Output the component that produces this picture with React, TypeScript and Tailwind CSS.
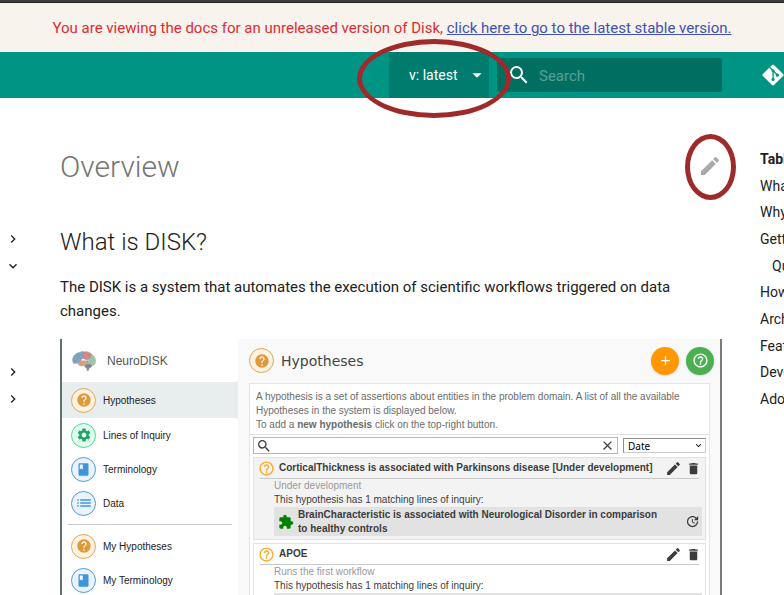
import React from "react";
import {
  MdAdd,
  MdArrowDropDown,
  MdBook,
  MdChevronRight,
  MdClose,
  MdDelete,
  MdEdit,
  MdExpandMore,
  MdExtension,
  MdHelp,
  MdHelpOutline,
  MdList,
  MdSearch,
  MdSettings,
  MdUpdate,
} from "react-icons/md";
import { FaGitAlt } from "react-icons/fa";

const toc = [
  "What is DISK?",
  "Why DISK?",
  "Getting started",
  "Quickstart",
  "How to cite",
  "Architecture",
  "Features",
  "Development",
  "Adopters",
];

const navRows = ["", "", "", "right", "down", "", "", "", "right", "right"];

function Ring({ className }: { className: string }) {
  return (
    <span
      aria-hidden="true"
      className={`pointer-events-none absolute z-10 rounded-[50%] border-[#9f2a2c] ${className}`}
    />
  );
}

function Brain() {
  return (
    <svg viewBox="0 0 72 60" className="h-5 w-6 shrink-0" aria-hidden="true">
      <g stroke="#85858f" strokeWidth="1.3" strokeLinejoin="round">
        <path d="M38 42c4-4 18-5 22 0 0 6-4 8-8 8l-2 8-5 1-1-8c-5-1-7-4-6-9z" fill="#8f8cab" />
        <path d="M2 30C0 18 10 6 24 4c6-3 12-3 14 0l-6 14-6 12c-8 6-18 10-22 6z" fill="#7faac6" />
        <path d="M36 3c10-3 18 1 22 6l-2 12-10 6-16-5z" fill="#df8a88" />
        <path d="M57 9c9 4 15 14 13 26-1 6-7 10-12 7l-13-8 1-9 9-5z" fill="#a6cdae" />
        <path d="M17 36c3-8 11-8 15-6 8-2 15 1 16 6-3 6-8 7-13 7-5 4-16 1-18-7z" fill="#dda981" />
      </g>
      <g fill="none" stroke="#667890" strokeWidth="1" strokeLinecap="round">
        <path d="M7 24c4-4 7 1 10-3M12 14c5-2 5 4 9 3M20 9c3 2 6 0 8 3M9 31c4-2 6-1 9-4M22 20c3 0 4 3 3 5" />
        <path d="M38 8c3 4 7 0 9 4M34 16c5-1 6 4 11 2M50 8c-1 5 4 4 3 9" stroke="#b06062" />
        <path d="M59 16c-2 4 4 5 2 9M65 22c-3 4 2 6-1 9M52 26c4 1 4 5 8 5M53 34c3-1 5 3 8 2" stroke="#6b9a7a" />
        <path d="M24 34c4-2 6 3 10 1s6-1 8 2M24 39c3 1 6-1 9 1" stroke="#a67050" />
        <path d="M43 44c4 1 9-1 14 1M44 48c4 0 8 0 11-1" stroke="#555368" />
      </g>
    </svg>
  );
}

function Badge({ kind }: { kind: string }) {
  const base = "flex size-[25px] shrink-0 items-center justify-center rounded-full border";
  if (kind === "help")
    return (
      <span className={`${base} border-[#e0a558] bg-[#fef2e0] text-[#e09a3e]`}>
        <MdHelp size={16} />
      </span>
    );
  if (kind === "gear")
    return (
      <span className={`${base} border-[#4fd896] bg-[#e0fdee] text-[#22a26a]`}>
        <MdSettings size={16} />
      </span>
    );
  return (
    <span className={`${base} border-[#4c9bdc] bg-[#edf3fe] text-[#3c96dc]`}>
      {kind === "book" ? <MdBook size={15} /> : <MdList size={18} />}
    </span>
  );
}

function SideLink({ kind, label, active }: { kind: string; label: string; active?: boolean }) {
  return (
    <a
      href="#app"
      className={`flex items-center gap-[7px] pl-[9px] text-[10px] text-[#222] ${active ? "h-9 bg-[#e8eeed]" : "h-[34px]"}`}
    >
      <Badge kind={kind} />
      {label}
    </a>
  );
}

function ItemHeader({ title }: { title: string }) {
  return (
    <div className="flex h-[21px] items-center border-b border-[#cacaca] font-bold">
      <MdHelpOutline size={17} className="-ml-0.5 mr-1 shrink-0 text-[#ffa726]" />
      <h4 className="flex-1 whitespace-nowrap">{title}</h4>
      <button aria-label="Edit" className="mr-1">
        <MdEdit size={17} />
      </button>
      <button aria-label="Delete" className="-mr-0.5">
        <MdDelete size={15} />
      </button>
    </div>
  );
}

function AppPanel() {
  return (
    <section
      id="app"
      className="mt-4 flex h-[400px] overflow-hidden border-l-2 border-r-2 border-l-[#5d7370] border-r-[#7b7b7b] font-['Liberation_Sans',Arial,sans-serif]"
    >
      <nav className="w-44 shrink-0 bg-white">
        <div className="flex h-[43px] items-center gap-[11px] pl-2.5 text-[12px] text-[#555]">
          <Brain />
          NeuroDISK
        </div>
        <SideLink kind="help" label="Hypotheses" active />
        <SideLink kind="gear" label="Lines of Inquiry" />
        <SideLink kind="book" label="Terminology" />
        <SideLink kind="list" label="Data" />
        <hr className="mx-1.5 my-1 border-[#ccc]" />
        <SideLink kind="help" label="My Hypotheses" />
        <SideLink kind="book" label="My Terminology" />
      </nav>
      <div className="min-w-0 flex-1 bg-[#f9f9f9] pr-2.5 pl-[11px] text-[10px] leading-[14px] text-[#3c3c3c]">
        <div className="flex h-11 items-center gap-[7px] pb-px">
          <Badge kind="help" />
          <h3 className="flex-1 font-['DejaVu_Sans',sans-serif] text-[14px] text-[#444]">Hypotheses</h3>
          <button
            aria-label="Add hypothesis"
            className="flex size-7 items-center justify-center rounded-full bg-[#ff9800] text-white shadow"
          >
            <MdAdd size={15} />
          </button>
          <button
            aria-label="Help"
            className="-mr-1 flex size-7 items-center justify-center rounded-full bg-[#4caf50] text-white shadow"
          >
            <MdHelpOutline size={17} />
          </button>
        </div>
        <div className="border border-[#e6e6e6] bg-white">
          <p className="h-[50px] px-1.5 pt-1.5 text-[#6b6b6b]">
            A hypothesis is a set of assertions about entities in the problem domain. A list of all the available
            Hypotheses in the system is displayed below.
            <br />
            To add a <b>new hypothesis</b> click on the top-right button.
          </p>
          <div className="border-t border-[#e0e0e0] px-[3px] pt-0.5">
            <div className="flex items-center gap-[5px]">
              <label className="flex h-[17px] flex-1 items-center border border-[#b5b5b5] bg-white px-0.5">
                <MdSearch size={16} />
                <input aria-label="Search hypotheses" className="min-w-0 flex-1 outline-none" />
                <button aria-label="Clear">
                  <MdClose size={15} />
                </button>
              </label>
              <label className="relative flex h-[15px] w-[83px] items-center border border-t-[#8f8f8f] border-r-[#ccc] border-b-[#ccc] border-l-[#8f8f8f]">
                <select
                  aria-label="Sort by"
                  className="w-full appearance-none bg-transparent pl-1 font-['Noto_Sans',sans-serif] text-[10px] text-black"
                >
                  <option>Date</option>
                </select>
                <MdExpandMore size={11} className="pointer-events-none absolute right-px text-black" />
              </label>
            </div>
            <article className="mt-[3px] h-[83px] border border-[#e2e2e2] bg-[#f3f3f3] pr-[3px] pl-1.5">
              <div className="pr-[3px]">
                <ItemHeader title="CorticalThickness is associated with Parkinsons disease [Under development]" />
              </div>
              <div className="pl-3.5">
                <p className="text-[#9a9a9a]">Under development</p>
                <p>This hypothesis has 1 matching lines of inquiry:</p>
                <div className="flex h-[29px] items-center bg-[#e2e2e2] pr-0.5 pl-1 font-bold">
                  <MdExtension size={16} className="mr-1 shrink-0 text-[#008000]" />
                  <p className="flex-1 pr-[18px]">
                    BrainCharacteristic is associated with Neurological Disorder in comparison to healthy controls
                  </p>
                  <button aria-label="Update">
                    <MdUpdate size={15} />
                  </button>
                </div>
              </div>
            </article>
            <article className="mt-[3px] h-[83px] border border-[#e2e2e2] bg-white pr-[3px] pl-1.5">
              <div className="pr-[3px]">
                <ItemHeader title="APOE" />
              </div>
              <div className="pl-3.5">
                <p className="text-[#9a9a9a]">Runs the first workflow</p>
                <p>This hypothesis has 1 matching lines of inquiry:</p>
                <div className="h-[29px] bg-[#e2e2e2]" />
              </div>
            </article>
          </div>
        </div>
      </div>
    </section>
  );
}

export default function App() {
  return (
    <div className="h-screen overflow-hidden bg-white font-[Roboto,sans-serif] text-[#212121]">
      <div className="h-[3px] border-b border-[#222] bg-[#3d3d3d]" />
      <aside className="flex h-[49px] items-center justify-center bg-[#f8f3ec] pt-0.5 text-[15px] text-[#dd2c34]">
        <p className="whitespace-nowrap">
          You are viewing the docs for an unreleased version of Disk,{" "}
          <a href="#latest" className="text-[#4051b5] underline">
            click here to go to the latest stable version.
          </a>
        </p>
      </aside>
      <header className="flex h-[46px] items-center justify-end bg-[#009485] text-white">
        <label className="relative mr-2 flex h-full w-[100px] items-center bg-[#007c6e]">
          <select
            aria-label="Version"
            className="h-full w-full appearance-none bg-transparent pl-5 text-[14px] text-white outline-none"
          >
            <option>v: latest</option>
          </select>
          <MdArrowDropDown size={22} className="pointer-events-none absolute right-px" />
          <Ring className="-top-[13px] -left-8 h-[79px] w-[154px] border-[5px]" />
        </label>
        <label className="mr-10 flex h-[34px] w-[225px] items-center gap-2 rounded-xs bg-[#006f61] pl-2.5">
          <MdSearch size={24} className="shrink-0" />
          <input
            aria-label="Search"
            placeholder="Search"
            className="min-w-0 flex-1 pt-0.5 text-[15px] outline-none placeholder:text-[#5a9f96]"
          />
        </label>
        <a href="#repo" aria-label="Repository">
          <FaGitAlt className="h-6 w-[22px]" />
        </a>
      </header>
      <div className="flex items-start">
        <nav
          aria-label="Sections"
          className="mt-[51px] flex h-[260px] w-[60px] shrink-0 flex-col justify-between pl-[5px]"
        >
          {navRows.map((kind, i) => (
            <div key={i} className="flex h-5 items-center">
              {kind && (
                <button aria-label="Toggle section">
                  {kind === "right" ? <MdChevronRight size={16} /> : <MdExpandMore size={16} />}
                </button>
              )}
            </div>
          ))}
        </nav>
        <main className="min-w-0 flex-1 pt-12">
          <div className="flex h-10 items-center justify-between">
            <h1 className="text-[30px] font-light text-[#757575]">Overview</h1>
            <a href="#edit" aria-label="Edit this page" className="relative text-[#aaa]">
              <MdEdit size={24} />
              <Ring className="-top-5 -left-[13px] h-[66px] w-[51px] border-[5px]" />
            </a>
          </div>
          <h2 className="mt-[39px] mb-4 text-[24px] leading-[34px] font-light">What is DISK?</h2>
          <p className="text-[15px] leading-6">
            The DISK is a system that automates the execution of scientific workflows triggered on data changes.
          </p>
          <AppPanel />
        </main>
        <nav
          aria-label="Table of contents"
          className="mt-[51px] ml-[38px] flex h-[260px] w-6 shrink-0 flex-col justify-between overflow-hidden text-[14px] leading-5 whitespace-nowrap"
        >
          <h2 className="font-bold">Table of contents</h2>
          {toc.map((label) => (
            <a key={label} href="#toc" className={label === "Quickstart" ? "pl-3" : ""}>
              {label}
            </a>
          ))}
        </nav>
      </div>
    </div>
  );
}
